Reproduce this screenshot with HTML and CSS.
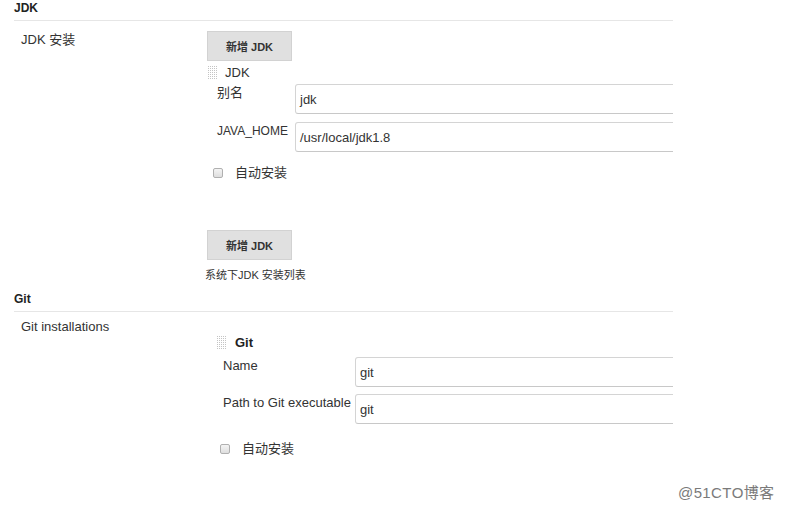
FILE: index.html
```html
<!DOCTYPE html>
<html lang="zh">
<head>
<meta charset="utf-8">
<title>Jenkins 全局工具配置</title>
<link rel="stylesheet" href="styles.css">
</head>
<body>
<div class="page">
  <section class="section">
    <div class="section-title">JDK</div>
    <div class="setting jdk-setting">
      <div class="setting-name jdk-name">JDK 安装</div>
      <div class="setting-main">
        <div class="btn">新增 JDK</div>
        <div class="repeat-head jdk-head">
          <svg class="handle" width="10" height="14" viewBox="0 0 10 14"><defs><pattern id="d1" width="2" height="2" patternUnits="userSpaceOnUse"><rect width="1" height="1" fill="#c4c4c4"/></pattern></defs><rect width="10" height="14" fill="url(#d1)"/></svg>
          <span>JDK</span>
        </div>
        <div class="fields jdk-fields">
          <div class="field">
            <div class="field-label">别名</div>
            <div class="field-input"><div class="input">jdk</div></div>
          </div>
          <div class="field">
            <div class="field-label narrow">JAVA_HOME</div>
            <div class="field-input"><div class="input">/usr/local/jdk1.8</div></div>
          </div>
        </div>
        <div class="check-row jdk-check"><span class="checkbox"></span><span>自动安装</span></div>
        <div class="btn btn-second">新增 JDK</div>
        <div class="help">系统下JDK 安装列表</div>
      </div>
    </div>
  </section>
  <section class="section git-section">
    <div class="section-title">Git</div>
    <div class="setting git-setting">
      <div class="setting-name git-name">Git installations</div>
      <div class="setting-main">
        <div class="repeat-head git-head">
          <svg class="handle" width="10" height="14" viewBox="0 0 10 14"><defs><pattern id="d2" width="2" height="2" patternUnits="userSpaceOnUse"><rect width="1" height="1" fill="#c4c4c4"/></pattern></defs><rect width="10" height="14" fill="url(#d2)"/></svg>
          <span class="bold">Git</span>
        </div>
        <div class="fields git-fields">
          <div class="field">
            <div class="field-label">Name</div>
            <div class="field-input"><div class="input">git</div></div>
          </div>
          <div class="field">
            <div class="field-label">Path to Git executable</div>
            <div class="field-input"><div class="input">git</div></div>
          </div>
        </div>
        <div class="check-row git-check"><span class="checkbox"></span><span>自动安装</span></div>
      </div>
    </div>
  </section>
</div>
<div class="watermark">@51CTO博客</div>
</body>
</html>
```
FILE: styles.css
```css
html, body {
  margin: 0;
  padding: 0;
  background: #fff;
}
body {
  font-family: "Liberation Sans", Arial, "Noto Sans CJK SC", sans-serif;
  font-size: 13px;
  color: #333;
  width: 785px;
  height: 512px;
  position: relative;
  overflow: hidden;
}
.page {
  width: 673px;
  padding-left: 14px;
  box-sizing: border-box;
  overflow: hidden;
}
.section-title {
  font-weight: bold;
  font-size: 12px;
  line-height: 16px;
  color: #222;
  padding-bottom: 4px;
  border-bottom: 1px solid #e6e6e6;
}
.git-section {
  margin-top: 9px;
}
.setting {
  display: grid;
  grid-template-columns: 193px 1fr;
}
.setting-name {
  padding-left: 7px;
  line-height: 16px;
}
.jdk-setting {
  padding-top: 10px;
}
.jdk-name {
  padding-top: 1px;
}
.git-setting {
  padding-top: 7px;
}
.setting-main {
  display: flex;
  flex-direction: column;
  align-items: flex-start;
  min-width: 0;
}
.btn {
  width: 85px;
  height: 30px;
  box-sizing: border-box;
  background: #e0e0e0;
  border: 1px solid #d2d2d2;
  font-size: 11px;
  font-weight: bold;
  color: #333;
  display: flex;
  align-items: center;
  justify-content: center;
}
.btn-second {
  margin-top: 49px;
}
.repeat-head {
  display: flex;
  align-items: center;
  line-height: 16px;
}
.handle {
  display: block;
  flex: none;
}
.jdk-head {
  margin-top: 4px;
  padding-left: 1px;
  gap: 7px;
}
.git-head {
  margin-top: 16px;
  padding-left: 10px;
  gap: 8px;
}
.bold {
  font-weight: bold;
  color: #222;
}
.fields {
  display: flex;
  flex-direction: column;
  gap: 8px;
  width: 100%;
}
.jdk-fields {
  margin-top: 3px;
}
.git-fields {
  margin-top: 6px;
  gap: 7px;
}
.field {
  display: flex;
  align-items: flex-start;
}
.field-label {
  flex: none;
  line-height: 16px;
  padding-top: 1px;
  white-space: nowrap;
}
.field-label.narrow {
  font-size: 12px;
}
.jdk-fields .field-label {
  width: 78px;
  padding-left: 10px;
}
.git-fields .field-label {
  width: 132px;
  padding-left: 16px;
}
.field-input {
  flex: 1;
  min-width: 0;
}
.input {
  width: 600px;
  height: 30px;
  box-sizing: border-box;
  border: 1px solid #d4d4d4;
  border-bottom-color: #c8c8c8;
  border-radius: 3px;
  padding: 0 4px;
  display: flex;
  align-items: center;
  color: #333;
  padding-top: 1px;
}
.check-row {
  display: flex;
  align-items: center;
  line-height: 16px;
}
.jdk-check {
  margin-top: 13px;
  padding-left: 6px;
  gap: 12px;
}
.git-check {
  margin-top: 17px;
  padding-left: 13px;
  gap: 12px;
}
.checkbox {
  width: 10px;
  height: 10px;
  box-sizing: border-box;
  border: 1px solid #b0b0b0;
  border-radius: 2px;
  background: linear-gradient(#f4f4f4, #dedede);
  flex: none;
}
.help {
  font-size: 11px;
  line-height: 14px;
  margin-top: 8px;
  margin-left: -2px;
  color: #333;
}
.watermark {
  position: absolute;
  left: 678px;
  top: 484px;
  font-size: 15px;
  letter-spacing: 0.4px;
  line-height: 18px;
  color: #7a7a7a;
  white-space: nowrap;
}
```
